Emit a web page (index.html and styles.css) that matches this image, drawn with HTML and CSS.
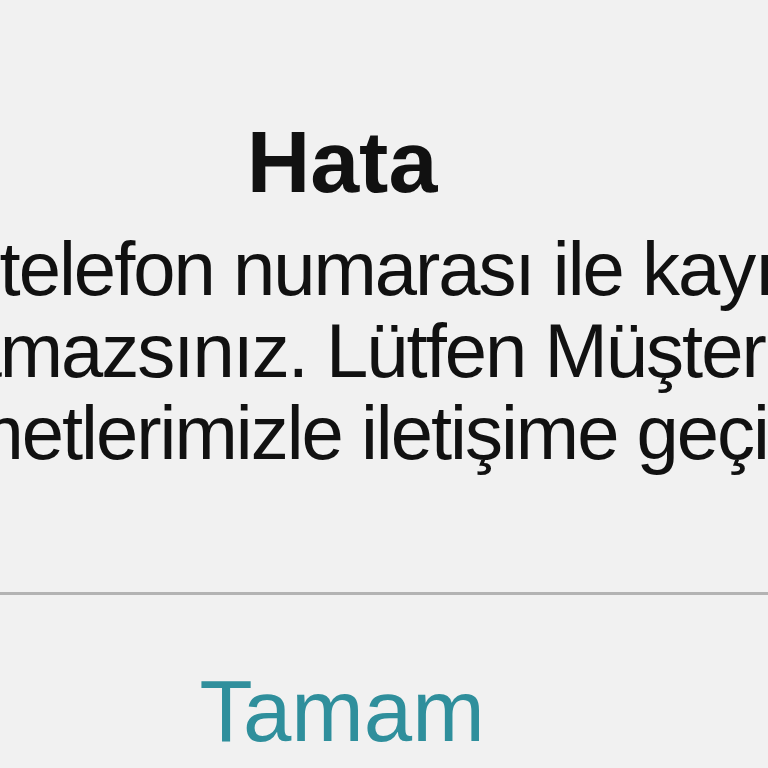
FILE: index.html
```html
<!DOCTYPE html>
<html lang="tr">
<head>
<meta charset="utf-8">
<title>Hata</title>
<link rel="stylesheet" href="styles.css">
</head>
<body>
<div class="alert">
  <div class="alert-body">
    <h1 class="alert-title">Hata</h1>
    <p class="alert-message">Bu telefon numarası ile kayıt<br>olamazsınız. Lütfen Müşteri<br>Hizmetlerimizle iletişime geçin.</p>
  </div>
  <div class="alert-actions">
    <button class="alert-button">Tamam</button>
  </div>
</div>
</body>
</html>
```
FILE: styles.css
```css
html, body {
  margin: 0;
  padding: 0;
  width: 768px;
  height: 768px;
  overflow: hidden;
  background: #f1f1f1;
}
body {
  font-family: "Liberation Sans", Arial, sans-serif;
}
.alert {
  width: 1400px;
  margin-left: -358px;
  display: flex;
  flex-direction: column;
}
.alert-body {
  padding-top: 112px;
  text-align: center;
  height: 595px;
  box-sizing: border-box;
  border-bottom: 3px solid #b3b3b3;
}
.alert-title {
  margin: 0;
  font-size: 88px;
  font-weight: bold;
  line-height: 100px;
  color: #111;
}
.alert-message {
  margin: 16px 0 0;
  font-size: 76px;
  line-height: 82px;
  letter-spacing: -2px;
  color: #111;
}
.alert-actions {
  display: flex;
  justify-content: center;
  padding-top: 66px;
}
.alert-button {
  border: 0;
  background: none;
  padding: 0;
  font-family: "Liberation Sans", Arial, sans-serif;
  font-size: 87px;
  line-height: 100px;
  color: #2f8f9c;
}
```
